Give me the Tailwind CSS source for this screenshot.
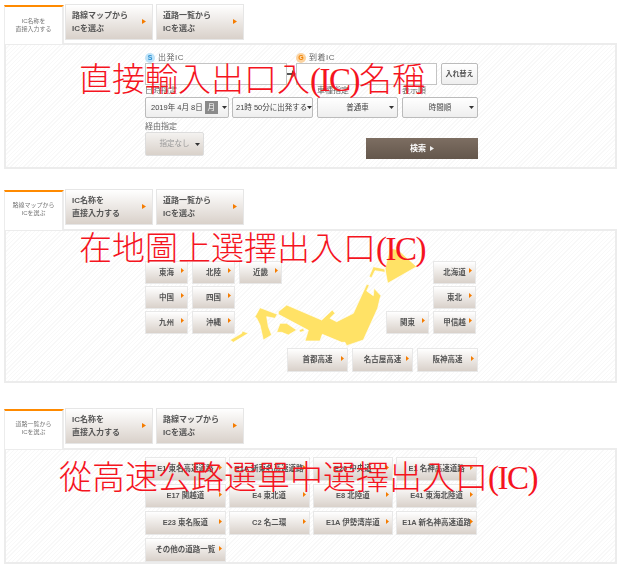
<!DOCTYPE html>
<html lang="ja">
<head>
<meta charset="utf-8">
<script src="https://cdn.jsdelivr.net/npm/@tailwindcss/browser@4"></script>
</head>
<body class="bg-white w-[620px] h-[571px] overflow-hidden relative font-['Liberation_Sans','Noto_Sans_CJK_JP',sans-serif] text-[#555]">

<div class="pt-1 pl-1 w-[617px] flex flex-col blur-[0.35px]">

  <!-- Section 1 -->
  <section class="h-[165px] flex flex-col">
    <div class="flex h-[39px] relative z-10">
      <div class="w-[60px] mt-px h-[39px] -mb-px bg-white border-t-2 border-t-[#ff8a00] border-r-2 border-r-[#ececec] border-l border-l-[#ececec] flex items-center justify-center text-center text-[6px] leading-[7.5px] text-[#777]">IC名称を<br>直接入力する</div>
      <button class="relative ml-px w-[88px] h-9 border border-[#e6e6e6] bg-linear-to-b from-white to-[#d9d1ca] text-left pl-[6px] text-[8px] leading-[13px] font-bold text-[#555]">路線マップから<br>ICを選ぶ<svg class="absolute right-[6px] top-[14px] w-1 h-[5px]" viewBox="0 0 4 5"><path d="M0 0L4 2.5L0 5Z" fill="#f57c00"/></svg></button>
      <button class="relative ml-[3px] w-[88px] h-9 border border-[#e6e6e6] bg-linear-to-b from-white to-[#d9d1ca] text-left pl-[6px] text-[8px] leading-[13px] font-bold text-[#555]">道路一覧から<br>ICを選ぶ<svg class="absolute right-[6px] top-[14px] w-1 h-[5px]" viewBox="0 0 4 5"><path d="M0 0L4 2.5L0 5Z" fill="#f57c00"/></svg></button>
    </div>
    <div class="flex-1 border-2 border-[#ececec] bg-[repeating-linear-gradient(135deg,#ffffff_0,#ffffff_2px,#f8f8f8_2px,#f8f8f8_3px)] pl-[139px] pt-2 text-[8px] text-[#666]">
      <div class="flex h-[10px] items-center">
        <div class="w-[151px] flex items-center gap-[3px]"><span class="w-[10px] h-[10px] rounded-full bg-[#bfe3f8] text-[#2a8fd0] text-[7px] font-bold flex items-center justify-center">S</span><span class="tracking-[0.5px]">出発IC</span></div>
        <div class="flex items-center gap-[3px]"><span class="w-[10px] h-[10px] rounded-full bg-[#fbd3a0] text-[#f08000] text-[7px] font-bold flex items-center justify-center">G</span><span class="tracking-[0.5px]">到着IC</span></div>
      </div>
      <div class="flex items-center h-[22px]">
        <div class="w-[142px] h-[22px] bg-white border border-[#c4c4c4]"></div>
        <svg class="w-[9px] h-2" viewBox="0 0 9 8"><path d="M0 3H5V0L9 4L5 8V5H0Z" fill="#555"/></svg>
        <div class="w-[141px] h-[22px] bg-white border border-[#c4c4c4]"></div>
        <button class="ml-1 w-[37px] h-[22px] rounded-[2px] border border-[#bbb] bg-linear-to-b from-white to-[#eee] text-[7px] font-bold text-[#555]">入れ替え</button>
      </div>
      <div class="flex h-3 items-center">
        <span class="w-[172px]">日時指定</span><span class="w-[85px]">車種指定</span><span>表示順</span>
      </div>
      <div class="flex h-[21px] gap-[3px] text-[7.5px] text-[#444]">
        <div class="w-[84px] rounded-[2px] border border-[#bbb] bg-linear-to-b from-white to-[#eee] flex items-center pl-[5px] gap-[2px]"><span class="whitespace-nowrap">2019年 4月 8日</span><span class="w-[13px] h-[13px] bg-[#8a8a8a] text-white flex items-center justify-center">月</span><svg class="w-[5px] h-[3px] ml-[2px]" viewBox="0 0 5 3"><path d="M0 0H5L2.5 3Z" fill="#333"/></svg></div>
        <div class="w-[81px] rounded-[2px] border border-[#bbb] bg-linear-to-b from-white to-[#eee] flex items-center pl-[3px]"><span class="whitespace-nowrap">21時 50分に出発する</span><svg class="w-[5px] h-[3px] shrink-0" viewBox="0 0 5 3"><path d="M0 0H5L2.5 3Z" fill="#333"/></svg></div>
        <div class="ml-px w-[81px] rounded-[2px] border border-[#bbb] bg-linear-to-b from-white to-[#eee] flex items-center justify-center relative"><span>普通車</span><svg class="absolute right-[3px] top-2 w-[5px] h-[3px]" viewBox="0 0 5 3"><path d="M0 0H5L2.5 3Z" fill="#333"/></svg></div>
        <div class="ml-px w-[76px] rounded-[2px] border border-[#bbb] bg-linear-to-b from-white to-[#eee] flex items-center justify-center relative"><span>時間順</span><svg class="absolute right-[3px] top-2 w-[5px] h-[3px]" viewBox="0 0 5 3"><path d="M0 0H5L2.5 3Z" fill="#333"/></svg></div>
      </div>
      <div class="flex justify-between w-[333px] mt-1">
        <div>
          <div class="h-[10px] flex items-center">経由指定</div>
          <div class="w-[59px] h-6 rounded-[2px] border border-[#ddd] bg-linear-to-b from-[#f4f2f0] to-[#d9d1ca] flex items-center justify-center relative text-[#999] text-[7.5px]"><span>指定なし</span><svg class="absolute right-[3px] top-[10px] w-[5px] h-[3px]" viewBox="0 0 5 3"><path d="M0 0H5L2.5 3Z" fill="#333"/></svg></div>
        </div>
        <button class="mt-4 w-[112px] h-[21px] bg-linear-to-b from-[#7d6e62] to-[#64574c] text-white text-[8px] font-bold flex items-center justify-center gap-1">検索<svg class="w-1 h-[5px]" viewBox="0 0 4 5"><path d="M0 0L4 2.5L0 5Z" fill="#eee"/></svg></button>
      </div>
    </div>
  </section>

  <!-- Section 2 -->
  <section class="mt-5 h-[194px] flex flex-col">
    <div class="flex h-[40px] relative z-10">
      <div class="w-[60px] mt-px h-[40px] -mb-px bg-white border-t-2 border-t-[#ff8a00] border-r-2 border-r-[#ececec] border-l border-l-[#ececec] flex items-center justify-center text-center text-[6px] leading-[7.5px] text-[#777] pb-[3px]">路線マップから<br>ICを選ぶ</div>
      <button class="relative ml-px w-[88px] h-9 border border-[#e6e6e6] bg-linear-to-b from-white to-[#d9d1ca] text-left pl-[6px] text-[8px] leading-[13px] font-bold text-[#555]">IC名称を<br>直接入力する<svg class="absolute right-[6px] top-[14px] w-1 h-[5px]" viewBox="0 0 4 5"><path d="M0 0L4 2.5L0 5Z" fill="#f57c00"/></svg></button>
      <button class="relative ml-[3px] w-[88px] h-9 border border-[#e6e6e6] bg-linear-to-b from-white to-[#d9d1ca] text-left pl-[6px] text-[8px] leading-[13px] font-bold text-[#555]">道路一覧から<br>ICを選ぶ<svg class="absolute right-[6px] top-[14px] w-1 h-[5px]" viewBox="0 0 4 5"><path d="M0 0L4 2.5L0 5Z" fill="#f57c00"/></svg></button>
    </div>
    <div class="relative flex-1 border-2 border-[#ececec] bg-[repeating-linear-gradient(135deg,#ffffff_0,#ffffff_2px,#f8f8f8_2px,#f8f8f8_3px)] pl-[139px] pt-[30px] text-[7.5px] font-bold text-[#555]">
      <svg class="absolute left-[219px] top-[14px] w-[200px] h-[110px]" viewBox="0 -30 600 330">
        <g fill="#ffe266" stroke="#ffffff" stroke-width="2">
          <path d="M480 42L495-21L520-15L575 35L488 85ZM480 42L445 35L432 65L440 68L450 47L480 52Z"/>
          <path d="M425 88L433 90L425 108L445 122L447 100L468 122L465 130L458 160L415 255L365 272L360 262L350 262L292 238L285 258L240 258L250 226L160 178L160 170L185 150L290 195L322 165L330 175L315 190L335 200L385 175Z"/>
          <path d="M155 232L165 205L185 205L215 225L190 240L170 232Z"/>
          <path d="M222 225L235 220L238 228L226 232Z"/>
          <path d="M90 185L105 158L157 178L150 190L125 185L130 215L140 240L115 255L105 210L95 190Z"/>
          <path d="M15 255L50 235L52 228L70 235L25 262Z"/>
        </g>
      </svg>
      <div class="relative flex justify-between w-[331px]">
        <div class="grid grid-cols-3 gap-x-1 gap-y-[2px] w-[137px] auto-rows-[23px] text-center">
          <div class="relative flex items-center justify-center border border-[#e8e8e8] bg-linear-to-b from-white to-[#d9d1ca]">東海<svg class="absolute right-[3px] top-[6px] w-[3px] h-[5px]" viewBox="0 0 4 5" preserveAspectRatio="none"><path d="M0 0L4 2.5L0 5Z" fill="#f57c00"/></svg></div>
          <div class="relative flex items-center justify-center border border-[#e8e8e8] bg-linear-to-b from-white to-[#d9d1ca]">北陸<svg class="absolute right-[3px] top-[6px] w-[3px] h-[5px]" viewBox="0 0 4 5" preserveAspectRatio="none"><path d="M0 0L4 2.5L0 5Z" fill="#f57c00"/></svg></div>
          <div class="relative flex items-center justify-center border border-[#e8e8e8] bg-linear-to-b from-white to-[#d9d1ca]">近畿<svg class="absolute right-[3px] top-[6px] w-[3px] h-[5px]" viewBox="0 0 4 5" preserveAspectRatio="none"><path d="M0 0L4 2.5L0 5Z" fill="#f57c00"/></svg></div>
          <div class="relative flex items-center justify-center border border-[#e8e8e8] bg-linear-to-b from-white to-[#d9d1ca]">中国<svg class="absolute right-[3px] top-[6px] w-[3px] h-[5px]" viewBox="0 0 4 5" preserveAspectRatio="none"><path d="M0 0L4 2.5L0 5Z" fill="#f57c00"/></svg></div>
          <div class="relative flex items-center justify-center border border-[#e8e8e8] bg-linear-to-b from-white to-[#d9d1ca]">四国<svg class="absolute right-[3px] top-[6px] w-[3px] h-[5px]" viewBox="0 0 4 5" preserveAspectRatio="none"><path d="M0 0L4 2.5L0 5Z" fill="#f57c00"/></svg></div>
          <div></div>
          <div class="relative flex items-center justify-center border border-[#e8e8e8] bg-linear-to-b from-white to-[#d9d1ca]">九州<svg class="absolute right-[3px] top-[6px] w-[3px] h-[5px]" viewBox="0 0 4 5" preserveAspectRatio="none"><path d="M0 0L4 2.5L0 5Z" fill="#f57c00"/></svg></div>
          <div class="relative flex items-center justify-center border border-[#e8e8e8] bg-linear-to-b from-white to-[#d9d1ca]">沖縄<svg class="absolute right-[3px] top-[6px] w-[3px] h-[5px]" viewBox="0 0 4 5" preserveAspectRatio="none"><path d="M0 0L4 2.5L0 5Z" fill="#f57c00"/></svg></div>
        </div>
        <div class="grid grid-cols-2 gap-x-1 gap-y-[2px] w-[90px] auto-rows-[23px] text-center">
          <div></div>
          <div class="relative flex items-center justify-center border border-[#e8e8e8] bg-linear-to-b from-white to-[#d9d1ca]">北海道<svg class="absolute right-[3px] top-[6px] w-[3px] h-[5px]" viewBox="0 0 4 5" preserveAspectRatio="none"><path d="M0 0L4 2.5L0 5Z" fill="#f57c00"/></svg></div>
          <div></div>
          <div class="relative flex items-center justify-center border border-[#e8e8e8] bg-linear-to-b from-white to-[#d9d1ca]">東北<svg class="absolute right-[3px] top-[6px] w-[3px] h-[5px]" viewBox="0 0 4 5" preserveAspectRatio="none"><path d="M0 0L4 2.5L0 5Z" fill="#f57c00"/></svg></div>
          <div class="relative flex items-center justify-center border border-[#e8e8e8] bg-linear-to-b from-white to-[#d9d1ca]">関東<svg class="absolute right-[3px] top-[6px] w-[3px] h-[5px]" viewBox="0 0 4 5" preserveAspectRatio="none"><path d="M0 0L4 2.5L0 5Z" fill="#f57c00"/></svg></div>
          <div class="relative flex items-center justify-center border border-[#e8e8e8] bg-linear-to-b from-white to-[#d9d1ca]">甲信越<svg class="absolute right-[3px] top-[6px] w-[3px] h-[5px]" viewBox="0 0 4 5" preserveAspectRatio="none"><path d="M0 0L4 2.5L0 5Z" fill="#f57c00"/></svg></div>
        </div>
      </div>
      <div class="relative flex gap-1 mt-[14px] ml-[142px] h-6">
        <div class="relative w-[61px] flex items-center justify-center border border-[#e8e8e8] bg-linear-to-b from-white to-[#d9d1ca]">首都高速<svg class="absolute right-[3px] top-[7px] w-[3px] h-[5px]" viewBox="0 0 4 5" preserveAspectRatio="none"><path d="M0 0L4 2.5L0 5Z" fill="#f57c00"/></svg></div>
        <div class="relative w-[61px] flex items-center justify-center border border-[#e8e8e8] bg-linear-to-b from-white to-[#d9d1ca]">名古屋高速<svg class="absolute right-[3px] top-[7px] w-[3px] h-[5px]" viewBox="0 0 4 5" preserveAspectRatio="none"><path d="M0 0L4 2.5L0 5Z" fill="#f57c00"/></svg></div>
        <div class="relative w-[61px] flex items-center justify-center border border-[#e8e8e8] bg-linear-to-b from-white to-[#d9d1ca]">阪神高速<svg class="absolute right-[3px] top-[7px] w-[3px] h-[5px]" viewBox="0 0 4 5" preserveAspectRatio="none"><path d="M0 0L4 2.5L0 5Z" fill="#f57c00"/></svg></div>
      </div>
    </div>
  </section>

  <!-- Section 3 -->
  <section class="mt-[25px] h-[156px] flex flex-col">
    <div class="flex h-[40px] relative z-10">
      <div class="w-[60px] mt-px h-[40px] -mb-px bg-white border-t-2 border-t-[#ff8a00] border-r-2 border-r-[#ececec] border-l border-l-[#ececec] flex items-center justify-center text-center text-[6px] leading-[7.5px] text-[#777] pb-[3px]">道路一覧から<br>ICを選ぶ</div>
      <button class="relative ml-px w-[88px] h-9 border border-[#e6e6e6] bg-linear-to-b from-white to-[#d9d1ca] text-left pl-[6px] text-[8px] leading-[13px] font-bold text-[#555]">IC名称を<br>直接入力する<svg class="absolute right-[6px] top-[14px] w-1 h-[5px]" viewBox="0 0 4 5"><path d="M0 0L4 2.5L0 5Z" fill="#f57c00"/></svg></button>
      <button class="relative ml-[3px] w-[88px] h-9 border border-[#e6e6e6] bg-linear-to-b from-white to-[#d9d1ca] text-left pl-[6px] text-[8px] leading-[13px] font-bold text-[#555]">路線マップから<br>ICを選ぶ<svg class="absolute right-[6px] top-[14px] w-1 h-[5px]" viewBox="0 0 4 5"><path d="M0 0L4 2.5L0 5Z" fill="#f57c00"/></svg></button>
    </div>
    <div class="flex-1 border-2 border-[#ececec] bg-[repeating-linear-gradient(135deg,#ffffff_0,#ffffff_2px,#f8f8f8_2px,#f8f8f8_3px)] pl-[139px] pt-[7px] text-[7.5px] font-bold text-[#555]">
      <div class="grid grid-cols-4 gap-x-[3px] gap-y-[3px] w-[332px] auto-rows-[24px]">
        <div class="relative flex items-center justify-center border border-[#e8e8e8] bg-linear-to-b from-white to-[#d9d1ca] whitespace-nowrap">E1 東名高速道路<svg class="absolute right-[3px] top-[7px] w-[3px] h-[5px]" viewBox="0 0 4 5" preserveAspectRatio="none"><path d="M0 0L4 2.5L0 5Z" fill="#f57c00"/></svg></div>
        <div class="relative flex items-center justify-center border border-[#e8e8e8] bg-linear-to-b from-white to-[#d9d1ca] whitespace-nowrap">E1A 新東名高速道路<svg class="absolute right-[3px] top-[7px] w-[3px] h-[5px]" viewBox="0 0 4 5" preserveAspectRatio="none"><path d="M0 0L4 2.5L0 5Z" fill="#f57c00"/></svg></div>
        <div class="relative flex items-center justify-center border border-[#e8e8e8] bg-linear-to-b from-white to-[#d9d1ca] whitespace-nowrap">E20 中央道<svg class="absolute right-[3px] top-[7px] w-[3px] h-[5px]" viewBox="0 0 4 5" preserveAspectRatio="none"><path d="M0 0L4 2.5L0 5Z" fill="#f57c00"/></svg></div>
        <div class="relative flex items-center justify-center border border-[#e8e8e8] bg-linear-to-b from-white to-[#d9d1ca] whitespace-nowrap">E1 名神高速道路<svg class="absolute right-[3px] top-[7px] w-[3px] h-[5px]" viewBox="0 0 4 5" preserveAspectRatio="none"><path d="M0 0L4 2.5L0 5Z" fill="#f57c00"/></svg></div>
        <div class="relative flex items-center justify-center border border-[#e8e8e8] bg-linear-to-b from-white to-[#d9d1ca] whitespace-nowrap">E17 関越道<svg class="absolute right-[3px] top-[7px] w-[3px] h-[5px]" viewBox="0 0 4 5" preserveAspectRatio="none"><path d="M0 0L4 2.5L0 5Z" fill="#f57c00"/></svg></div>
        <div class="relative flex items-center justify-center border border-[#e8e8e8] bg-linear-to-b from-white to-[#d9d1ca] whitespace-nowrap">E4 東北道<svg class="absolute right-[3px] top-[7px] w-[3px] h-[5px]" viewBox="0 0 4 5" preserveAspectRatio="none"><path d="M0 0L4 2.5L0 5Z" fill="#f57c00"/></svg></div>
        <div class="relative flex items-center justify-center border border-[#e8e8e8] bg-linear-to-b from-white to-[#d9d1ca] whitespace-nowrap">E8 北陸道<svg class="absolute right-[3px] top-[7px] w-[3px] h-[5px]" viewBox="0 0 4 5" preserveAspectRatio="none"><path d="M0 0L4 2.5L0 5Z" fill="#f57c00"/></svg></div>
        <div class="relative flex items-center justify-center border border-[#e8e8e8] bg-linear-to-b from-white to-[#d9d1ca] whitespace-nowrap">E41 東海北陸道<svg class="absolute right-[3px] top-[7px] w-[3px] h-[5px]" viewBox="0 0 4 5" preserveAspectRatio="none"><path d="M0 0L4 2.5L0 5Z" fill="#f57c00"/></svg></div>
        <div class="relative flex items-center justify-center border border-[#e8e8e8] bg-linear-to-b from-white to-[#d9d1ca] whitespace-nowrap">E23 東名阪道<svg class="absolute right-[3px] top-[7px] w-[3px] h-[5px]" viewBox="0 0 4 5" preserveAspectRatio="none"><path d="M0 0L4 2.5L0 5Z" fill="#f57c00"/></svg></div>
        <div class="relative flex items-center justify-center border border-[#e8e8e8] bg-linear-to-b from-white to-[#d9d1ca] whitespace-nowrap">C2 名二環<svg class="absolute right-[3px] top-[7px] w-[3px] h-[5px]" viewBox="0 0 4 5" preserveAspectRatio="none"><path d="M0 0L4 2.5L0 5Z" fill="#f57c00"/></svg></div>
        <div class="relative flex items-center justify-center border border-[#e8e8e8] bg-linear-to-b from-white to-[#d9d1ca] whitespace-nowrap">E1A 伊勢湾岸道<svg class="absolute right-[3px] top-[7px] w-[3px] h-[5px]" viewBox="0 0 4 5" preserveAspectRatio="none"><path d="M0 0L4 2.5L0 5Z" fill="#f57c00"/></svg></div>
        <div class="relative flex items-center justify-center border border-[#e8e8e8] bg-linear-to-b from-white to-[#d9d1ca] whitespace-nowrap">E1A 新名神高速道路<svg class="absolute right-[3px] top-[7px] w-[3px] h-[5px]" viewBox="0 0 4 5" preserveAspectRatio="none"><path d="M0 0L4 2.5L0 5Z" fill="#f57c00"/></svg></div>
        <div class="relative flex items-center justify-center border border-[#e8e8e8] bg-linear-to-b from-white to-[#d9d1ca] whitespace-nowrap">その他の道路一覧<svg class="absolute right-[3px] top-[7px] w-[3px] h-[5px]" viewBox="0 0 4 5" preserveAspectRatio="none"><path d="M0 0L4 2.5L0 5Z" fill="#f57c00"/></svg></div>
      </div>
    </div>
  </section>
</div>

<!-- Red annotations drawn over the screenshot -->
<div class="absolute left-[79px] top-[60px] text-[33px] leading-[40px] text-[#f5141e] whitespace-nowrap font-['Liberation_Serif','Noto_Sans_CJK_TC',serif] font-light">直接輸入出口入<span class="tracking-[-1.5px]">(IC)</span>名稱</div>
<div class="absolute left-[79px] top-[229px] text-[33px] leading-[40px] text-[#f5141e] whitespace-nowrap font-['Liberation_Serif','Noto_Sans_CJK_TC',serif] font-light">在地圖上選擇出入口<span class="tracking-[-1.5px]">(IC)</span></div>
<div class="absolute left-[59px] top-[458px] text-[33px] leading-[40px] text-[#f5141e] whitespace-nowrap font-['Liberation_Serif','Noto_Sans_CJK_TC',serif] font-light">從高速公路選單中選擇出入口<span class="tracking-[-1.5px]">(IC)</span></div>

</body>
</html>
